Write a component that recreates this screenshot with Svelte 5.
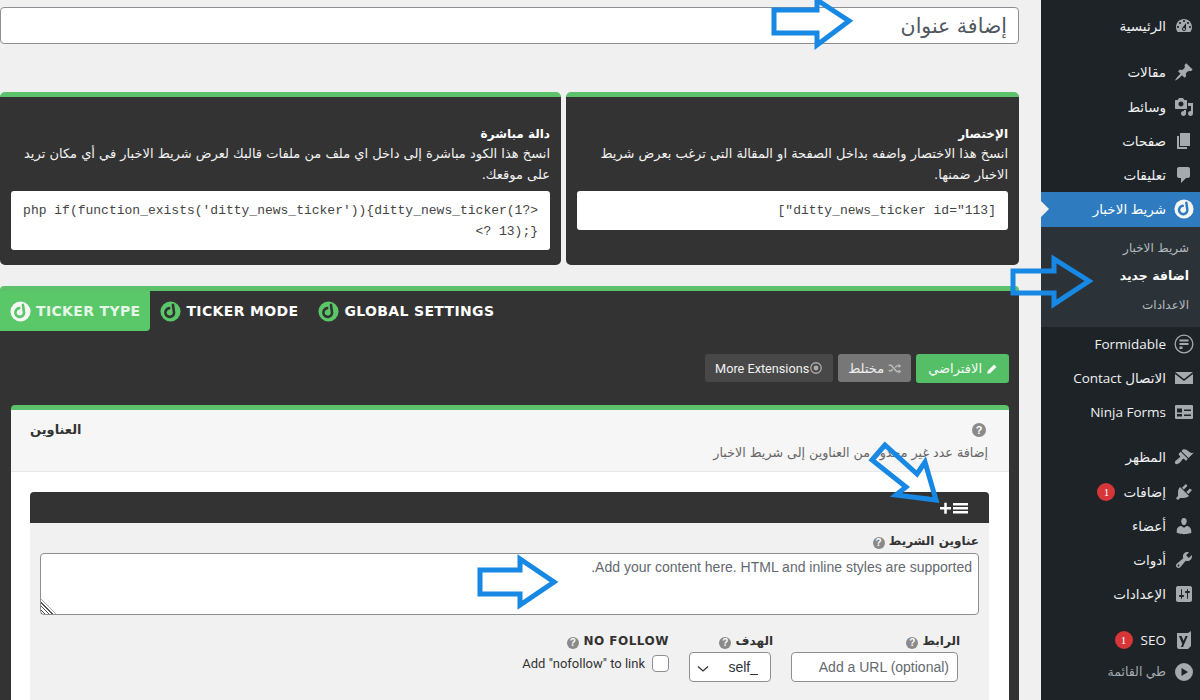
<script>
  const d = {
    home: "M3.76 16h12.48c1.1-1.37 1.76-3.11 1.76-5 0-4.42-3.58-8-8-8s-8 3.58-8 8c0 1.89.66 3.63 1.76 5zM10 4c.55 0 1 .45 1 1s-.45 1-1 1-1-.45-1-1 .45-1 1-1zM6 6c.55 0 1 .45 1 1s-.45 1-1 1-1-.45-1-1 .45-1 1-1zm8 0c.55 0 1 .45 1 1s-.45 1-1 1-1-.45-1-1 .45-1 1-1zm-5.37 5.55L12 7v6c0 1.1-.9 2-2 2s-2-.9-2-2c0-.57.24-1.08.63-1.45zM4 10c.55 0 1 .45 1 1s-.45 1-1 1-1-.45-1-1 .45-1 1-1zm12 0c.55 0 1 .45 1 1s-.45 1-1 1-1-.45-1-1 .45-1 1-1zm-5 3c0-.55-.45-1-1-1s-1 .45-1 1 .45 1 1 1 1-.45 1-1z",
    post: "M10.44 3.02l1.82-1.82 6.36 6.35-1.83 1.82c-1.05-.68-2.48-.57-3.41.36l-.75.75c-.92.93-1.04 2.35-.35 3.41l-1.83 1.82-2.41-2.41-2.8 2.79c-.42.42-3.38 2.71-3.8 2.29s1.86-3.39 2.28-3.81l2.79-2.79L4.1 9.36l1.83-1.82c1.05.69 2.48.57 3.4-.36l.75-.75c.93-.92 1.05-2.35.36-3.41z",
    media: "M13 11V4c0-.55-.45-1-1-1h-1.67L9 1H5L3.67 3H2c-.55 0-1 .45-1 1v7c0 .55.45 1 1 1h10c.55 0 1-.45 1-1zM7 4.5c1.38 0 2.5 1.12 2.5 2.5S8.38 9.5 7 9.5 4.5 8.38 4.5 7 5.62 4.5 7 4.5zM14 6h5v10.5c0 1.38-1.12 2.5-2.5 2.5S14 17.88 14 16.5s1.12-2.5 2.5-2.5c.17 0 .34.02.5.05V9h-3V6zm-4 8.05V13h2v3.5c0 1.38-1.12 2.5-2.5 2.5S7 17.88 7 16.5 8.12 14 9.5 14c.17 0 .34.02.5.05z",
    page: "M6 15V2h10v13H6zm-1 1h8v2H3V5h2v11z",
    comment: "M5 2h9c1.1 0 2 .9 2 2v7c0 1.1-.9 2-2 2h-2l-5 5v-5H5c-1.1 0-2-.9-2-2V4c0-1.1.9-2 2-2z",
    formidable: "M10 .5a9.500 9.500 0 1 0 0 19 9.500 9.500 0 0 0 0-19zm0 1.300a8.200 8.200 0 1 1 0 16.400 8.200 8.200 0 0 1 0-16.400zM5.500 5.500v2h9v-2zM5.500 9v2h9V9zM5.500 12.500v2.500h3v-2.500z",
    mail: "M1 4h18L10 11zM1 6l9 7 9-7v10H1z",
    ninja: "M2 3h16a1 1 0 0 1 1 1v12a1 1 0 0 1-1 1H2a1 1 0 0 1-1-1V4a1 1 0 0 1 1-1zm1 3.500v4h5v-4zm7 1v1.500h7V7.500zm-7 4.500v2.500h5V12zm7 .5V14h7v-1.500z",
    appearance: "M14.48 11.06L7.41 3.99l1.5-1.5c.5-.56 2.3-.47 3.51.32 1.21.8 1.43 1.28 2.91 2.1 1.18.64 2.45 1.26 4.45.85zm-.71.71L6.7 4.7 4.93 6.47c-.39.39-.39 1.02 0 1.41l1.06 1.06c.39.39.39 1.03 0 1.42-.6.6-1.43 1.11-2.21 1.69-.35.26-.7.53-1.01.84C1.43 13.23.25 15.54 1.41 16.7c1.15 1.15 3.46-.03 4.83-1.37.31-.31.58-.66.85-1.02.57-.78 1.08-1.61 1.69-2.21.39-.39 1.02-.39 1.41 0l1.06 1.06c.39.39 1.02.39 1.41 0z",
    plugin: "M13.11 4.36L9.87 7.6 8 5.73l3.24-3.24c.35-.34 1.05-.2 1.56.32.52.51.66 1.21.31 1.55zm-8 1.77l.91-1.12 9.01 9.01-1.19.84c-.71.71-2.63 1.16-3.82 1.16H6.14L4.9 17.26c-.59.59-1.54.59-2.12 0-.59-.58-.59-1.53 0-2.12l1.24-1.24v-3.88c0-1.13.4-3.19 1.09-3.89zm7.26 3.97l3.24-3.24c.34-.35 1.04-.21 1.55.31.52.51.66 1.21.31 1.55l-3.24 3.25z",
    user: "M10 9.25c-2.27 0-2.73-3.44-2.73-3.44C7 4.02 7.82 2 9.97 2c2.16 0 2.98 2.02 2.71 3.81 0 0-.41 3.44-2.68 3.44zm0 2.57L12.72 10c2.39 0 4.52 2.33 4.52 4.53v2.49s-3.65 1.13-7.24 1.13c-3.65 0-7.24-1.13-7.24-1.13v-2.49c0-2.25 1.94-4.48 4.47-4.48z",
    tool: "M16.68 9.77c-1.34 1.34-3.3 1.67-4.95.99l-5.41 6.52c-.99.99-2.59.99-3.58 0s-.99-2.59 0-3.57l6.52-5.42c-.68-1.65-.35-3.61.99-4.95 1.28-1.28 3.12-1.62 4.72-1.06l-2.89 2.89 2.82 2.82 2.86-2.87c.53 1.58.18 3.39-1.08 4.65zM3.81 16.21c.4.39 1.04.39 1.43 0 .4-.4.4-1.04 0-1.43-.39-.4-1.03-.4-1.43 0-.39.39-.39 1.03 0 1.43z",
    settings: "M18 16V4c0-1.1-.9-2-2-2H4c-1.1 0-2 .9-2 2v12c0 1.1.9 2 2 2h12c1.1 0 2-.9 2-2zM8 11h1c.55 0 1 .45 1 1s-.45 1-1 1H8v1.500c0 .28-.22.5-.5.5s-.5-.22-.5-.5V13H6c-.55 0-1-.45-1-1s.45-1 1-1h1V5.500c0-.28.22-.5.5-.5s.5.22.5.5V11zm5-2h-1c-.55 0-1-.45-1-1s.45-1 1-1h1V5.500c0-.28.22-.5.5-.5s.5.22.5.5V7h1c.55 0 1 .45 1 1s-.45 1-1 1h-1v5.500c0 .28-.22.5-.5.5s-.5-.22-.5-.5V9z",
    seo: "M3 3h11l3-2v15l-3 3H5a2 2 0 0 1-2-2zm2 3 3.300 8-1.500 3H9l4.700-11h-2.200L9.600 10.800 7.500 6z",
    collapse: "M10 1a9 9 0 1 0 0 18 9 9 0 0 0 0-18zM7.500 6l6.500 4-6.500 4z"
  };
  const top1 = [
    { t: "مقالات", i: d.post },
    { t: "وسائط", i: d.media },
    { t: "صفحات", i: d.page },
    { t: "تعليقات", i: d.comment }
  ];
  const mid = [
    { t: "Formidable", i: d.formidable },
    { t: "الاتصال Contact", i: d.mail },
    { t: "Ninja Forms", i: d.ninja }
  ];
  const low = [
    { t: "المظهر", i: d.appearance },
    { t: "إضافات", i: d.plugin, b: "1" },
    { t: "أعضاء", i: d.user },
    { t: "أدوات", i: d.tool },
    { t: "الإعدادات", i: d.settings }
  ];
  const tabs = [
    { t: "TICKER TYPE", on: true },
    { t: "TICKER MODE" },
    { t: "GLOBAL SETTINGS" }
  ];
</script>

{#snippet ditty(cls)}
  <svg class="ditty {cls}" viewBox="0 0 24 24">
    <circle class="disc" cx="12" cy="12" r="11.500" />
    <path class="cut" d="M10.500 8.200a5 5 0 1 0 5.300 3.300L14.800 4.500" />
  </svg>
{/snippet}

{#snippet icon(path)}
  <svg class="ico" viewBox="0 0 20 20"><path fill-rule="evenodd" d={path} /></svg>
{/snippet}

{#snippet help()}
  <span class="help">?</span>
{/snippet}

{#snippet menu(it)}
  <div class="item">
    {@render icon(it.i)}
    <span class="lbl">{it.t}</span>
    {#if it.b}<span class="badge">{it.b}</span>{/if}
  </div>
{/snippet}

<div class="page">
  <main class="main">
    <input class="title" dir="rtl" placeholder="إضافة عنوان" />

    <section class="cards" dir="rtl">
      <article class="card short">
        <h3>الإختصار</h3>
        <p>انسخ هذا الاختصار واضفه بداخل الصفحة او المقالة التي ترغب بعرض شريط الاخبار ضمنها.</p>
        <div class="code">[ditty_news_ticker id="113"]</div>
      </article>
      <article class="card long">
        <h3>دالة مباشرة</h3>
        <p>انسخ هذا الكود مباشرة إلى داخل اي ملف من ملفات قالبك لعرض شريط الاخبار في أي مكان تريد على موقعك.</p>
        <div class="code">&lt;?php if(function_exists('ditty_news_ticker')){'{'}ditty_news_ticker(113);{'}'} ?&gt;</div>
      </article>
    </section>

    <section class="box">
      <nav class="tabs">
        {#each tabs as tab}
          <div class="tab" class:on={tab.on}>
            {@render ditty(tab.on ? "lite" : "green")}
            <span>{tab.t}</span>
          </div>
        {/each}
      </nav>

      <div class="btns" dir="rtl">
        <span class="btn b1">
          <svg class="bi" viewBox="0 0 20 20"><path d="M13.500 2.500l4 4L7 17l-5 1 1-5z" /></svg>
          الافتراضي
        </span>
        <span class="btn b2">
          <svg class="bi" viewBox="0 0 20 20"><path d="M1 5h4l8 9h2v-2l4 3-4 3v-2h-3L4 7H1zM1 15v-2h3l2-2 1.500 1.500L5 15zM12 6h3V4l4 3-4 3V8h-2l-2 2-1.300-1.500z" /></svg>
          مختلط
        </span>
        <span class="btn b3">
          <svg class="bi" viewBox="0 0 20 20"><circle cx="10" cy="10" r="7.500" fill="none" stroke="currentColor" stroke-width="1.800" /><circle cx="10" cy="10" r="3.500" /></svg>
          <bdi>More Extensions</bdi>
        </span>
      </div>

      <div class="panel">
        <header class="phead" dir="rtl">
          <div class="prow">
            {@render help()}
            <strong>العناوين</strong>
          </div>
          <div class="pdesc">إضافة عدد غير محدود من العناوين إلى شريط الاخبار</div>
        </header>
        <div class="pbody">
          <div class="bar">
            <svg class="plus" viewBox="0 0 30 16">
              <path d="M1 7h4.250V2.750h2.500V7H12v2.500H7.750v4.250h-2.500V9.500H1zM14 3h15v2.500H14zM14 7h15v2.500H14zM14 11h15v2.500H14z" />
            </svg>
          </div>
          <div class="fields" dir="rtl">
            <label class="lab wide" for="c">عناوين الشريط {@render help()}</label>
            <div class="tawrap">
              <textarea id="c" placeholder="Add your content here. HTML and inline styles are supported."></textarea>
              <span class="grip"></span>
            </div>
            <div class="row">
              <div class="fld url">
                <label class="lab" for="u">الرابط {@render help()}</label>
                <input id="u" placeholder="Add a URL (optional)" />
              </div>
              <div class="fld tgt">
                <label class="lab" for="s">الهدف {@render help()}</label>
                <select id="s"><option>_self</option></select>
              </div>
              <div class="fld nf">
                <span class="lab latin">NO FOLLOW {@render help()}</span>
                <label class="chk"><input type="checkbox" /> <bdi>Add "nofollow" to link</bdi></label>
              </div>
            </div>
          </div>
        </div>
      </div>
    </section>
  </main>

  <aside class="side" dir="rtl">
    <div class="item first">
      {@render icon(d.home)}
      <span class="lbl">الرئيسية</span>
    </div>
    <div class="group">
      {#each top1 as it}{@render menu(it)}{/each}
    </div>
    <div class="item active">
      {@render ditty("lite")}
      <span class="lbl">شريط الاخبار</span>
    </div>
    <div class="sub">
      <div>شريط الاخبار</div>
      <div class="cur">اضافة جديد</div>
      <div>الاعدادات</div>
    </div>
    <div class="group g2">
      {#each mid as it}{@render menu(it)}{/each}
    </div>
    <div class="group">
      {#each low as it}{@render menu(it)}{/each}
    </div>
    <div class="group">
      {@render menu({ t: "SEO", i: d.seo, b: "1" })}
    </div>
    <div class="item fold">
      {@render icon(d.collapse)}
      <span class="lbl">طي القائمة</span>
    </div>
  </aside>

  <svg class="arrows" viewBox="0 0 1200 700">
    <polygon points="774,10 817,10 817,0 849,21 817,45 817,33 774,33" />
    <polygon points="1013,271 1054,271 1054,259 1089,281 1054,304 1054,293 1013,293" />
    <polygon points="480,570 520,570 520,559 554,582 520,605 520,594 480,594" />
    <polygon points="885,445 872,460 906,487 896,495 936,500 925,462 917,474" />
  </svg>
</div>

<style>
  :global(body) { margin: 0; background: #f0f0f1; }
  .page {
    position: relative; display: flex; width: 1200px; height: 700px; overflow: hidden;
    font-family: "Liberation Sans", "DejaVu Sans", sans-serif; font-size: 13px; color: #3c434a;
    background: #f0f0f1;
  }
  .main { width: 1041px; flex: none; }
  .title {
    display: block; box-sizing: border-box; width: 1019px; height: 37px; margin: 7px 0 0;
    padding: 0 11px; background: #fff; border: 1px solid #8c8f94; border-radius: 4px;
    font: 20.500px "DejaVu Sans", sans-serif; outline: none;
  }
  .title::placeholder { color: #50575e; opacity: 1; }
  .cards { display: flex; gap: 5px; width: 1019px; margin-top: 48px; height: 173px; }
  .card {
    box-sizing: border-box; background: #333; color: #fff; border-top: 5px solid #5cc26c;
    border-radius: 5px; padding: 28px 11px 0; height: 173px;
  }
  .card.short { width: 453px; }
  .card.long { width: 561px; }
  .card h3 { margin: 0; font: bold 12px/18px "DejaVu Sans", sans-serif; }
  .card p { margin: 0 0 6px; font: 13px/21px "DejaVu Sans", sans-serif; color: #f2f2f2; }
  .code {
    background: #fff; color: #444; border-radius: 3px; padding: 10px 12px 8px;
    font: 13px/20.500px "Liberation Mono", monospace; word-break: break-all;
  }
  .box {
    box-sizing: border-box; width: 1019px; height: 420px; margin-top: 21px;
    background: #333; border-top: 5px solid #5cc26c; border-radius: 4px 4px 0 0;
  }
  .tabs { display: flex; height: 40px; }
  .tab {
    display: flex; align-items: center; gap: 5px; padding: 0 10px;
    color: #fff; font: bold 14px "DejaVu Sans", sans-serif;
    letter-spacing: .35px;
  }
  .tab.on { background: #5ac869; border-radius: 0 0 4px 0; color: #e6f7e8; }
  .ditty { width: 21px; height: 21px; flex: none; }
  .disc { fill: #fff; }
  .cut { fill: none; stroke: #2f7cc0; stroke-width: 3; stroke-linecap: round; }
  .ditty.lite .disc { fill: #f4f7f4; }
  .tab.on .ditty .cut { stroke: #5ac869; }
  .ditty.green .disc { fill: #5ac869; }
  .ditty.green .cut { stroke: #333; }
  .btns { display: flex; gap: 5px; padding: 23px 10px 0 0; height: 30px; margin-bottom: 21px; }
  .btn {
    display: flex; align-items: center; gap: 4px; height: 29px; padding: 0 11px;
    box-sizing: border-box; border-radius: 3px; color: #fff; font: 13px "DejaVu Sans", sans-serif;
  }
  .b1 { background: #55bf67; color: #f3fbf4; padding: 0 11px 0 12px; }
  .b2 { background: #777; color: #eee; height: 28px; padding: 0 9px 0 10px; }
  .b2 .bi { width: 14px; height: 14px; color: #bbb; fill: #bbb; }
  .b3 { background: #484848; color: #f0f0f0; font: 12.700px Roboto, sans-serif; height: 28px; gap: 0; padding: 0 10px; }
  .bi { width: 12px; height: 12px; fill: currentColor; }
  .b3 .bi { width: 14px; height: 14px; fill: #aaa; color: #aaa; }
  .panel {
    box-sizing: border-box; width: 998px; height: 300px; margin-left: 11px;
    background: #fff; border-top: 5px solid #5cc26c; border-radius: 4px 4px 0 0;
  }
  .phead { box-sizing: border-box; height: 62px; padding: 9px 21px 0 19px; background: #f6f6f6; border-bottom: 1px solid #e8e8e8; }
  .prow { display: flex; justify-content: space-between; align-items: center; height: 21px; padding-right: 2px; }
  .prow strong { font: bold 13px "DejaVu Sans", sans-serif; color: #333; }
  .phead .help { width: 14px; height: 14px; line-height: 14px; font-size: 11px; }
  .pdesc { margin-top: 5px; font: 12.700px "DejaVu Sans", sans-serif; color: #666; }
  .pbody { padding: 20px 20px 0 19px; }
  .bar { display: flex; justify-content: flex-end; align-items: center; height: 31px; padding-right: 20px; background: #333; border-radius: 4px 4px 0 0; }
  .plus { width: 30px; height: 16px; fill: #fff; }
  .fields { height: 177px; background: #f1f1f1; padding: 9px 10px 0; box-sizing: border-box; }
  .lab { display: block; font: bold 12px/18px "DejaVu Sans", sans-serif; color: #333; letter-spacing: .5px; }
  .lab.wide { height: 21px; letter-spacing: .9px; }
  .help {
    display: inline-block; width: 12px; height: 12px; border-radius: 50%; background: #8a8a8a;
    color: #fff; font: bold 10px/12px "Liberation Sans", sans-serif; text-align: center; letter-spacing: 0;
    vertical-align: -1px;
  }
  .tawrap { position: relative; width: 939px; height: 62px; }
  textarea {
    display: block; box-sizing: border-box; width: 939px; height: 62px; padding: 5px 6px;
    border: 1px solid #8c8f94; border-radius: 4px; background: #fff; font: 14px "Liberation Sans", sans-serif;
    resize: none; outline: none;
  }
  textarea::placeholder { color: #646970; opacity: 1; }
  .grip {
    position: absolute; left: 1px; bottom: 1px; width: 15px; height: 15px;
    background: repeating-linear-gradient(45deg, #555 0 1px, transparent 1px 2.500px);
    clip-path: polygon(0 0, 0 100%, 100% 100%);
  }
  .row { display: flex; gap: 20px; margin-top: 17px; padding-right: 21px; }
  .fld { display: flex; flex-direction: column; gap: 2px; }
  .fld input:not([type]), .fld select {
    box-sizing: border-box; height: 30px; border: 1px solid #8c8f94; border-radius: 4px; background-color: #fff;
    padding: 0 8px; font: 14px "Liberation Sans", sans-serif; color: #2c3338; outline: none;
  }
  .url input { width: 167px; }
  .url input::placeholder { color: #646970; opacity: 1; }
  .tgt select {
    width: 82px; appearance: none; padding-right: 12px;
    background: #fff url("data:image/svg+xml,%3Csvg xmlns='http://www.w3.org/2000/svg' width='12' height='8'%3E%3Cpath d='M1 1.500l5 4.500 5-4.500' fill='none' stroke='%23333' stroke-width='1.300'/%3E%3C/svg%3E") no-repeat 7px 12px;
  }
  .url .lab { margin-right: -2px; }
  .tgt .lab { margin-right: -2px; }
  .chk { display: flex; align-items: center; gap: 7px; font: 13px Roboto, sans-serif; color: #333; height: 22px; }
  .chk input {
    margin: 0; width: 17px; height: 17px; appearance: none; background: #fff;
    border: 1px solid #8c8f94; border-radius: 4px; box-sizing: border-box;
  }
  .side { width: 159px; flex: none; background: #1d2327; color: #f0f0f1; font: 13.500px "Open Sans", "DejaVu Sans", sans-serif; padding-top: 9px; box-sizing: border-box; }
  .item { display: flex; align-items: center; gap: 8px; height: 34.250px; padding-right: 6px; box-sizing: border-box; }
  .ico { width: 20px; height: 20px; flex: none; fill: #a7aaad; }
  .group { margin-top: 11px; }
  .group.g2 { margin-top: 0; }
  .side > .group:nth-child(2) { margin-top: 12px; }
  .active { background: #2e7cbf; color: #fff; position: relative; }
  .active .ditty { width: 20px; height: 20px; }
  .active::after {
    content: ""; position: absolute; left: 0; top: 9px; border: 8px solid transparent; border-left-color: #f0f0f1; border-right: 0;
  }
  .sub { background: #2c3338; height: 100px; padding-top: 7px; box-sizing: border-box; color: #b4b9be; font: 12px "DejaVu Sans", sans-serif; }
  .sub div { height: 28.500px; line-height: 28.500px; padding-right: 11px; }
  .sub .cur { color: #fff; font-weight: bold; font-size: 12.500px; }
  .badge {
    width: 18px; height: 18px; border-radius: 50%; background: #d63638; color: #fff;
    font: 11px/18px "Liberation Serif", serif; text-align: center;
  }
  .fold { color: #a7aaad; font-size: 12.500px; height: 30px; }
  .arrows { position: absolute; left: 0; top: 0; width: 1200px; height: 700px; pointer-events: none; }
  .arrows polygon { fill: none; stroke: #1788e4; stroke-width: 5; stroke-linejoin: miter; }
</style>
